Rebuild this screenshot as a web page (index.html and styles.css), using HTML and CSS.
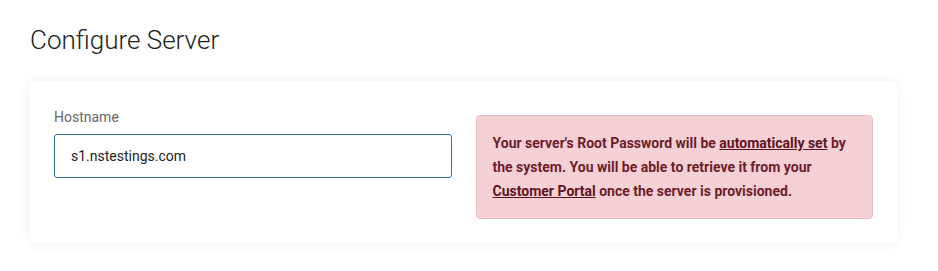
FILE: index.html
```html
<!DOCTYPE html>
<html lang="en">
<head>
  <meta charset="UTF-8" />
  <title>Configure Server</title>
  <link rel="stylesheet" href="styles.css">
</head>
<body>
  <div class="page">
    <h1 class="page-title">Configure Server</h1>
    <div class="card">
      <div class="field">
        <label class="field-label" for="hostname">Hostname</label>
        <input class="field-input" id="hostname" type="text" value="s1.nstestings.com" />
      </div>
      <div class="alert">
        Your server's Root Password will be <a href="#">automatically set</a> by the system. You will be able to retrieve it from your <a href="#">Customer Portal</a> once the server is provisioned.
      </div>
    </div>
  </div>
</body>
</html>
```

FILE: styles.css
```css
* {
  margin: 0;
  padding: 0;
  box-sizing: border-box;
}

html, body {
  background: #fff;
  font-family: 'Roboto', 'Liberation Sans', sans-serif;
  color: #333;
}

.page {
  padding: 24px 41px 24px 30px;
}

.page-title {
  font-size: 26px;
  font-weight: 300;
  line-height: 32px;
  color: #222;
  margin-bottom: 25px;
}

.card {
  display: grid;
  grid-template-columns: 1fr 1fr;
  gap: 24px;
  align-items: start;
  background: #fff;
  border-radius: 6px;
  box-shadow: 0 0 14px rgba(0, 0, 0, 0.07);
  padding: 24px;
}

.field-label {
  display: block;
  font-size: 14px;
  line-height: 18px;
  color: #666;
  margin: 3px 0 8px;
}

.field-input {
  display: block;
  width: 100%;
  height: 44px;
  padding: 0 16px;
  border: 1px solid #2f6fa3;
  border-radius: 3px;
  font-family: inherit;
  font-size: 14px;
  color: #222;
  outline: none;
}

.alert {
  margin-top: 10px;
  padding: 15px 16px;
  background: #f5d1d6;
  border: 1px solid #efb9c1;
  border-radius: 4px;
  color: #6e1c28;
  font-size: 14px;
  font-weight: 700;
  line-height: 24px;
}

.alert a {
  color: #5e1420;
  text-decoration: underline;
}
```
